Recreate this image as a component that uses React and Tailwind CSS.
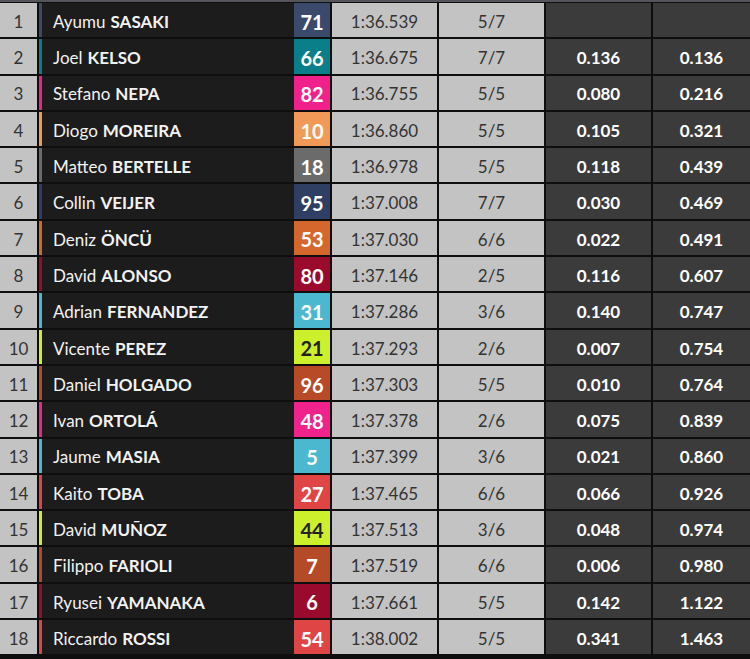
import React from 'react';

const riders = [
  { pos: 1, first: 'Ayumu', last: 'SASAKI', num: 71, color: '#3b4a6b', time: '1:36.539', laps: '5/7', gap: '', prev: '' },
  { pos: 2, first: 'Joel', last: 'KELSO', num: 66, color: '#0b7f89', time: '1:36.675', laps: '7/7', gap: '0.136', prev: '0.136' },
  { pos: 3, first: 'Stefano', last: 'NEPA', num: 82, color: '#f0218b', time: '1:36.755', laps: '5/5', gap: '0.080', prev: '0.216' },
  { pos: 4, first: 'Diogo', last: 'MOREIRA', num: 10, color: '#f19a58', time: '1:36.860', laps: '5/5', gap: '0.105', prev: '0.321' },
  { pos: 5, first: 'Matteo', last: 'BERTELLE', num: 18, color: '#6b6b6b', time: '1:36.978', laps: '5/5', gap: '0.118', prev: '0.439' },
  { pos: 6, first: 'Collin', last: 'VEIJER', num: 95, color: '#2e3f63', time: '1:37.008', laps: '7/7', gap: '0.030', prev: '0.469' },
  { pos: 7, first: 'Deniz', last: 'ÖNCÜ', num: 53, color: '#d4672c', time: '1:37.030', laps: '6/6', gap: '0.022', prev: '0.491' },
  { pos: 8, first: 'David', last: 'ALONSO', num: 80, color: '#9a0a2c', time: '1:37.146', laps: '2/5', gap: '0.116', prev: '0.607' },
  { pos: 9, first: 'Adrian', last: 'FERNANDEZ', num: 31, color: '#4bb8cf', time: '1:37.286', laps: '3/6', gap: '0.140', prev: '0.747' },
  { pos: 10, first: 'Vicente', last: 'PEREZ', num: 21, color: '#cdf02c', time: '1:37.293', laps: '2/6', gap: '0.007', prev: '0.754', dark: true },
  { pos: 11, first: 'Daniel', last: 'HOLGADO', num: 96, color: '#b84a27', time: '1:37.303', laps: '5/5', gap: '0.010', prev: '0.764' },
  { pos: 12, first: 'Ivan', last: 'ORTOLÁ', num: 48, color: '#f0238c', time: '1:37.378', laps: '2/6', gap: '0.075', prev: '0.839' },
  { pos: 13, first: 'Jaume', last: 'MASIA', num: 5, color: '#4bb8cf', time: '1:37.399', laps: '3/6', gap: '0.021', prev: '0.860' },
  { pos: 14, first: 'Kaito', last: 'TOBA', num: 27, color: '#e04546', time: '1:37.465', laps: '6/6', gap: '0.066', prev: '0.926' },
  { pos: 15, first: 'David', last: 'MUÑOZ', num: 44, color: '#cdf02c', time: '1:37.513', laps: '3/6', gap: '0.048', prev: '0.974', dark: true },
  { pos: 16, first: 'Filippo', last: 'FARIOLI', num: 7, color: '#b44a27', time: '1:37.519', laps: '6/6', gap: '0.006', prev: '0.980' },
  { pos: 17, first: 'Ryusei', last: 'YAMANAKA', num: 6, color: '#9a0a2c', time: '1:37.661', laps: '5/5', gap: '0.142', prev: '1.122' },
  { pos: 18, first: 'Riccardo', last: 'ROSSI', num: 54, color: '#e04546', time: '1:38.002', laps: '5/5', gap: '0.341', prev: '1.463' },
];

// light grey data cell
const grey = 'bg-[#c3c3c3] text-[#333] flex items-center justify-center pt-[3px] text-[17px]';
// dark gap cell
const dark = 'bg-[#3b3b3b] text-white font-bold flex items-center justify-center pt-[3px] text-[17px]';

const Row = ({ r }) => (
  <div className="flex h-[34.3px] gap-[2px]">
    <div className={`w-[37px] ${grey}`}>{r.pos}</div>
    <div className="w-[291px] flex">
      <div className="w-[3px]" style={{ backgroundColor: r.color }} />
      <div className="flex-1 bg-[#1c1c1c] flex items-center pt-[3px] pl-[11px] text-[17px] text-[#f2f2f2]">
        <span>{r.first}</span>
        <span className="font-bold ml-[5px]">{r.last}</span>
      </div>
      <div
        className={`w-[36px] flex items-center justify-center pt-[3px] font-bold text-[20px] ${r.dark ? 'text-[#222]' : 'text-white'}`}
        style={{ backgroundColor: r.color }}
      >
        {r.num}
      </div>
    </div>
    <div className={`w-[105px] ${grey}`}>{r.time}</div>
    <div className={`w-[105px] ${grey}`}>{r.laps}</div>
    <div className={`w-[105px] ${dark}`}>{r.gap}</div>
    <div className={`flex-1 ${dark}`}>{r.prev}</div>
  </div>
);

export default function App() {
  return (
    <div className="w-[750px] h-[659px] bg-[#0e0e0e] overflow-hidden" style={{ fontFamily: 'Lato, sans-serif' }}>
      <div className="h-[2px] bg-[#54555c]" />
      <div className="flex flex-col gap-[2px] pt-[1px]">
        {riders.map((r) => (
          <Row key={r.pos} r={r} />
        ))}
      </div>
    </div>
  );
}
